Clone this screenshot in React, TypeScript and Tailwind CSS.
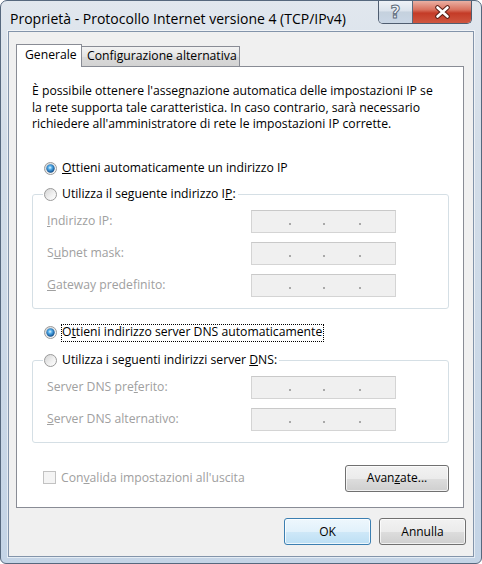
import React from 'react';

const Radio: React.FC<{ checked?: boolean }> = ({ checked }) => (
  <svg width="13" height="13" viewBox="0 0 13 13" className="shrink-0">
    <defs>
      <linearGradient id="radioBg" x1="0" y1="0" x2="1" y2="1">
        <stop offset="0" stopColor="#d2d2d2" />
        <stop offset="0.6" stopColor="#f2f2f2" />
        <stop offset="1" stopColor="#ffffff" />
      </linearGradient>
      <radialGradient id="radioDot" cx="0.45" cy="0.4" r="0.65">
        <stop offset="0" stopColor="#e2f6ff" />
        <stop offset="0.35" stopColor="#53ace8" />
        <stop offset="0.8" stopColor="#1a5e9e" />
        <stop offset="1" stopColor="#123f6e" />
      </radialGradient>
    </defs>
    <circle cx="6.5" cy="6.5" r="6" fill="url(#radioBg)" stroke="#9a9a9a" />
    {checked && <circle cx="6.5" cy="6.5" r="4.2" fill="url(#radioDot)" />}
  </svg>
);

const IpBox: React.FC = () => (
  <div className="w-[145px] h-[23px] border border-[#d4d4d4] border-t-[#c9c9c9] bg-[#f0f0f0] flex items-start pt-[12px]">
    <span className="ml-[37px] w-[2px] h-[2px] bg-[#a9a9a9]" />
    <span className="ml-[32px] w-[2px] h-[2px] bg-[#a9a9a9]" />
    <span className="ml-[34px] w-[2px] h-[2px] bg-[#a9a9a9]" />
  </div>
);

const IpRow: React.FC<{ children: React.ReactNode }> = ({ children }) => (
  <div className="flex items-center">
    <div className="w-[204px] text-[#a0a0a0]">{children}</div>
    <IpBox />
  </div>
);

const Button: React.FC<{ children: React.ReactNode; primary?: boolean; className?: string }> = ({ children, primary, className }) => (
  <button
    className={`h-[27px] rounded-[3px] border text-[12px] text-black ${
      primary
        ? 'border-[#3c7fb1] bg-[linear-gradient(to_bottom,#eef7fd_0%,#e1f1fb_50%,#cfe8f8_51%,#bcdff4_100%)] shadow-[inset_0_0_0_1px_rgba(255,255,255,0.75)]'
        : 'border-[#707070] bg-[linear-gradient(to_bottom,#f2f2f2_0%,#ebebeb_50%,#dddddd_51%,#cfcfcf_100%)] shadow-[inset_0_0_0_1px_rgba(255,255,255,0.7)]'
    } ${className ?? ''}`}
  >
    {children}
  </button>
);

const App: React.FC = () => {
  return (
    <div className="w-[482px] h-[564px] bg-white font-['Open_Sans','Liberation_Sans',Arial,sans-serif] text-[12.2px] text-black">
      <div className="w-full h-full flex flex-col rounded-t-[7px] rounded-b-[6px] border border-[#56687e] bg-[linear-gradient(to_bottom,#e1e7ee_0%,#d3dde8_25%,#c4d4e6_100%)] overflow-hidden">
        {/* Title bar */}
        <div className="h-[30px] flex items-start shrink-0">
          <div className="pl-[9px] pt-[9px] text-[14px] leading-[17px]">
            Proprietà - Protocollo Internet versione 4 (TCP/IPv4)
          </div>
          <div className="ml-auto mr-[9px] flex h-[23px] rounded-b-[5px] border border-t-0 border-[#4f5d70] overflow-hidden">
            <div className="w-[34px] flex items-center justify-center bg-[linear-gradient(to_bottom,#eef2f7_0%,#dbe3ec_45%,#c5d1de_50%,#c9d6e5_100%)] border-r border-[#5c6a7c]">
              <span className="font-['DejaVu_Sans',sans-serif] font-bold text-[17px] leading-none text-[#f4f7fa] [-webkit-text-stroke:1px_#5d6b7b]">?</span>
            </div>
            <div className="w-[58px] flex items-center justify-center bg-[linear-gradient(to_bottom,#eab0a3_0%,#d9715e_40%,#c43b27_55%,#cf5640_100%)]">
              <svg width="17" height="14" viewBox="0 0 17 14">
                <path d="M3.5 2.5 L13.5 11.5 M13.5 2.5 L3.5 11.5" stroke="#5b2118" strokeWidth="4.6" strokeLinecap="round" />
                <path d="M3.5 2.5 L13.5 11.5 M13.5 2.5 L3.5 11.5" stroke="#ffffff" strokeWidth="2.6" strokeLinecap="round" />
              </svg>
            </div>
          </div>
        </div>

        {/* Client area */}
        <div className="ml-[7px] w-[466px] h-[526px] border border-[#8394aa] bg-[#f0f0f0] flex flex-col shadow-[0_0_0_1px_rgba(255,255,255,0.55)]">
          <div className="pt-[12px] ml-[7px] w-[448px]">
            {/* Tabs */}
            <div className="flex items-end h-[22px]">
              <div className="relative z-10 w-[66px] h-[23px] -mb-px border border-b-0 border-[#898c95] bg-white pl-[8px] pt-[2px] leading-[16px]">
                Generale
              </div>
              <div className="w-[158px] h-[20px] border border-b-0 border-l-0 border-[#898c95] bg-[linear-gradient(to_bottom,#f3f3f3,#e3e3e3_50%,#d9d9d9_51%,#d3d3d3)] pl-[5px] pt-[1px] leading-[16px]">
                Configurazione alternativa
              </div>
            </div>

            {/* Panel */}
            <div className="h-[442px] border border-[#898c95] bg-white">
              <div className="pt-[16px] pl-[15px] leading-[16.5px]">
                <div>È possibile ottenere l'assegnazione automatica delle impostazioni IP se</div>
                <div>la rete supporta tale caratteristica. In caso contrario, sarà necessario</div>
                <div>richiedere all'amministratore di rete le impostazioni IP corrette.</div>
              </div>

              <div className="mt-[27px] ml-[27px] h-[17px] flex items-center gap-[5px]">
                <Radio checked />
                <span><u>O</u>ttieni automaticamente un indirizzo IP</span>
              </div>

              <fieldset className="ml-[15px] mt-[9px] w-[417px] rounded-[3px] border border-[#d5dfe5] px-[10px] pb-[11px]">
                <legend className="px-[1px] pr-[2px]">
                  <div className="h-[17px] flex items-center gap-[5px]">
                    <Radio />
                    <span>Utilizza il seguente indirizzo I<u>P</u>:</span>
                  </div>
                </legend>
                <div className="pt-[7px] pl-[4px] flex flex-col gap-[9px]">
                  <IpRow><u>I</u>ndirizzo IP:</IpRow>
                  <IpRow>S<u>u</u>bnet mask:</IpRow>
                  <IpRow><u>G</u>ateway predefinito:</IpRow>
                </div>
              </fieldset>

              <div className="mt-[15px] ml-[27px] h-[18px] flex items-center gap-[4px]">
                <Radio checked />
                <span className="h-[18px] flex items-center border border-dotted border-black pr-[1px]">
                  O<u>t</u>tieni indirizzo server DNS automaticamente
                </span>
              </div>

              <fieldset className="ml-[15px] mt-[10px] w-[417px] rounded-[3px] border border-[#d5dfe5] px-[10px] pb-[11px]">
                <legend className="px-[1px] pr-[2px]">
                  <div className="h-[17px] flex items-center gap-[5px]">
                    <Radio />
                    <span>Utilizza i seguenti indirizzi server <u>D</u>NS:</span>
                  </div>
                </legend>
                <div className="pt-[7px] pl-[4px] flex flex-col gap-[9px]">
                  <IpRow>Server DNS pre<u>f</u>erito:</IpRow>
                  <IpRow><u>S</u>erver DNS alternativo:</IpRow>
                </div>
              </fieldset>

              <div className="ml-[15px] mt-[22px] w-[417px] flex items-center justify-between">
                <div className="pl-[11px] flex items-center gap-[5px] text-[#a0a0a0]">
                  <span className="w-[13px] h-[13px] border border-[#c2c2c2] bg-[#f4f4f4]" />
                  <span>Con<u>v</u>alida impostazioni all'uscita</span>
                </div>
                <Button className="w-[104px]">Avan<u>z</u>ate...</Button>
              </div>
            </div>
          </div>

          {/* Dialog buttons */}
          <div className="mt-[10px] mr-[7px] flex justify-end gap-[8px]">
            <Button primary className="w-[87px]">OK</Button>
            <Button className="w-[87px]">Annulla</Button>
          </div>
        </div>
      </div>
    </div>
  );
};

export default App;
